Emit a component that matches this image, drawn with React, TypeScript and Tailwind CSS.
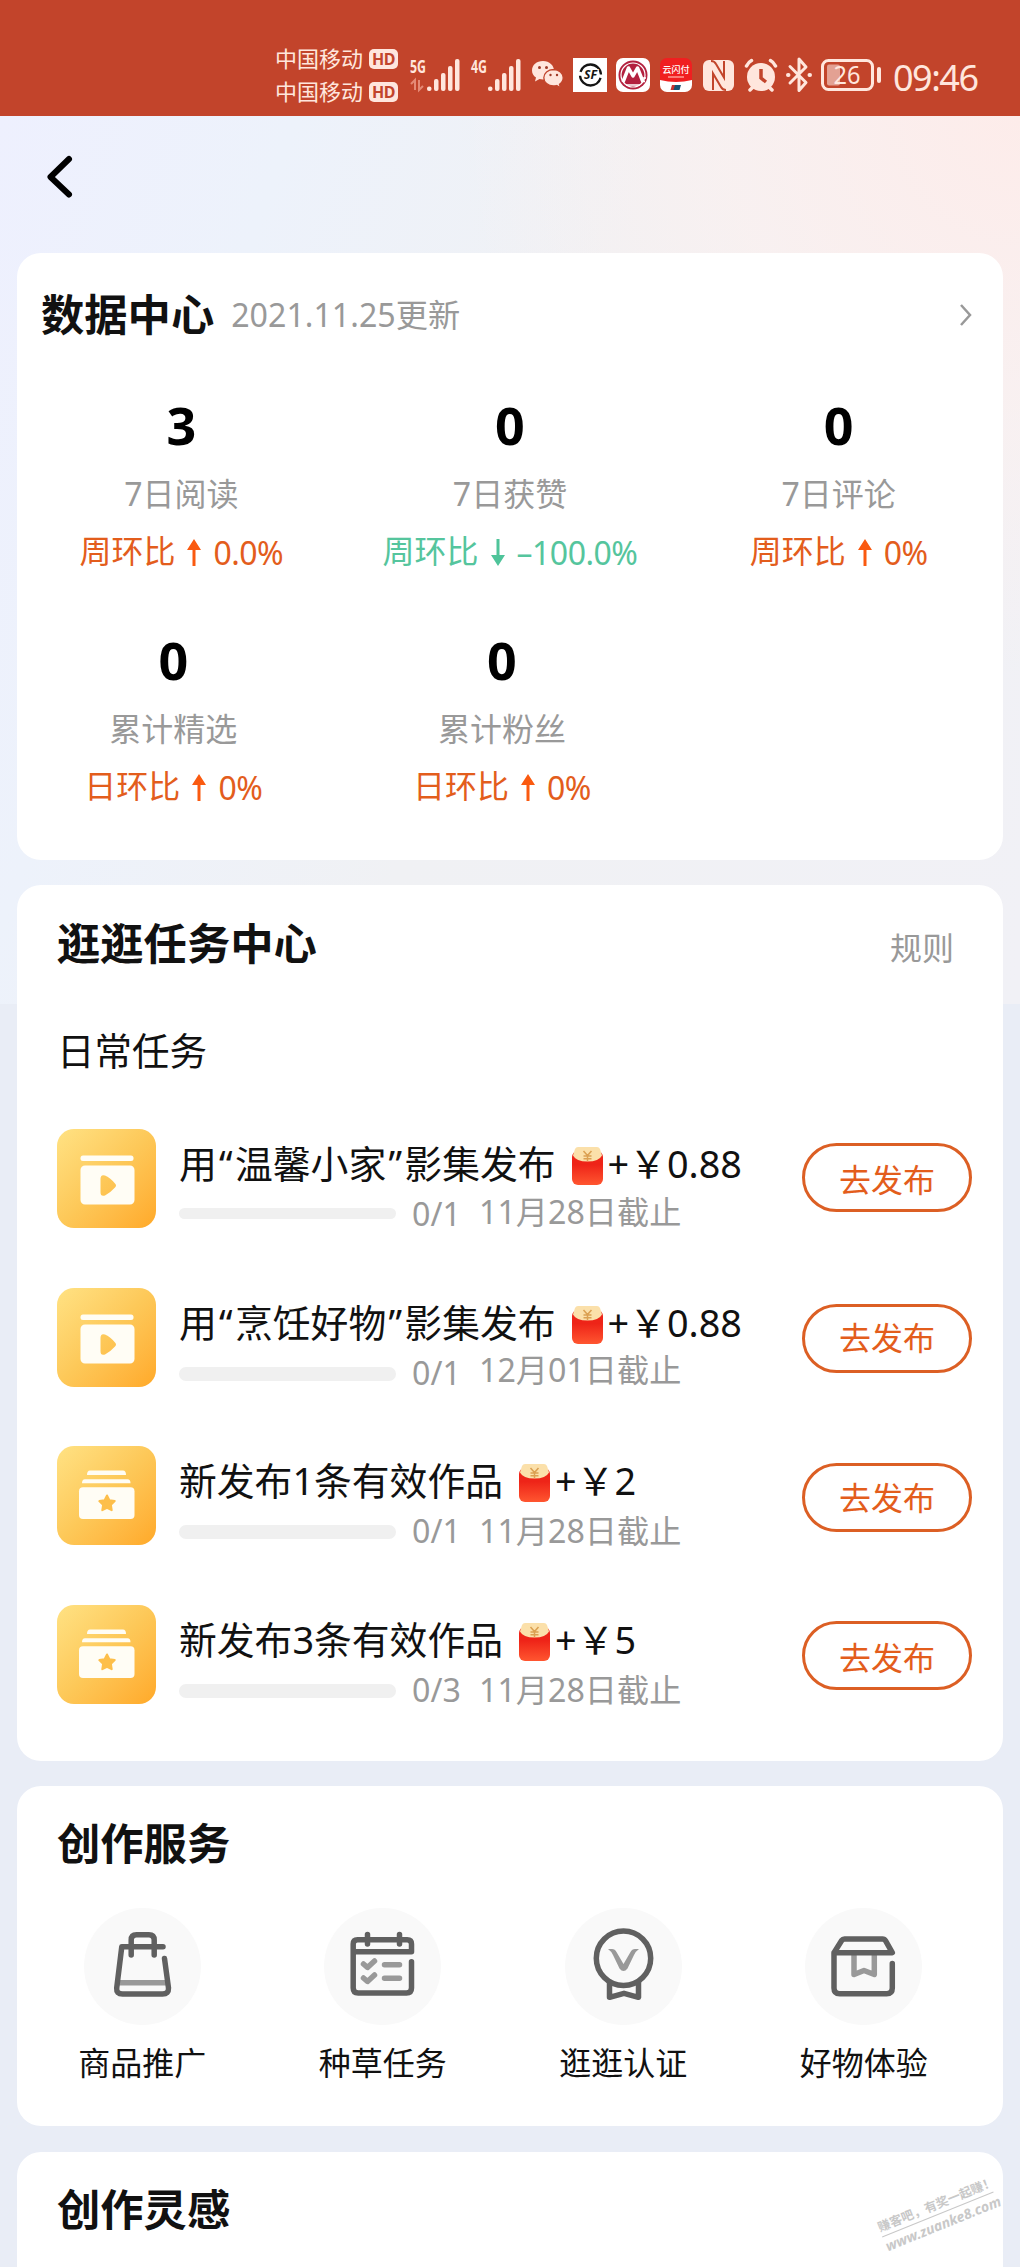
import type { ReactNode } from 'react';

type Stat = { value: string; label: string; period: string; change: string; down?: boolean };

const weekly: Stat[] = [
  { value: '3', label: '7日阅读', period: '周环比', change: '0.0%' },
  { value: '0', label: '7日获赞', period: '周环比', change: '–100.0%', down: true },
  { value: '0', label: '7日评论', period: '周环比', change: '0%' },
];

const daily: Stat[] = [
  { value: '0', label: '累计精选', period: '日环比', change: '0%' },
  { value: '0', label: '累计粉丝', period: '日环比', change: '0%' },
];

const tasks = [
  { title: <Album name="温馨小家" />, reward: '0.88', progress: '0/1', deadline: '11月28日截止', album: true, bar: 'mt-[20px] h-[11px]', date: 'mt-1', button: 'mt-[14px] pt-1' },
  { title: <Album name="烹饪好物" />, reward: '0.88', progress: '0/1', deadline: '12月01日截止', album: true, bar: 'mt-[20px] h-[14px]', date: 'mt-[3px]', button: 'mt-[16px]' },
  { title: '新发布1条有效作品', reward: '2', progress: '0/1', deadline: '11月28日截止', album: false, bar: 'mt-[20px] h-[14px]', date: 'mt-1.5', button: 'mt-[17px]' },
  { title: '新发布3条有效作品', reward: '5', progress: '0/3', deadline: '11月28日截止', album: false, bar: 'mt-[20px] h-[14px]', date: 'mt-1.5', button: 'mt-[16px] pt-1' },
];

function Album({ name }: { name: string }) {
  return (
    <>
      用<span className="px-[2.300px]">“</span>{name}<span className="px-[2.300px]">”</span>影集发布
    </>
  );
}

function Signal({ label, active }: { label: string; active?: boolean }) {
  return (
    <svg className="overflow-visible" width="52" height="34" viewBox="0 0 52 34" fill="#ffe6dd">
      <text x="0" y="14.500" fontSize="17.500" fontWeight="700" textLength="16" lengthAdjust="spacingAndGlyphs">{label}</text>
      {active && (
        <g stroke="#e58a76" strokeWidth="2" fill="none">
          <path d="M5 32V22l-4 4M9 22v10l4-4" />
        </g>
      )}
      <rect x="17" y="28.500" width="4.500" height="4.500" rx="2" />
      <rect x="24" y="21" width="4.500" height="12" rx="2" />
      <rect x="31" y="15" width="4.500" height="18" rx="2" />
      <rect x="38" y="8" width="4.500" height="25" rx="2" />
      <rect x="45" y="1" width="4.500" height="32" rx="2" />
    </svg>
  );
}

function Carrier() {
  return (
    <div className="flex h-[33px] items-center gap-[6px]">
      <span className="text-[22px] leading-[33px] text-[#ffe6dd]">中国移动</span>
      <span className="flex h-5 w-[29px] items-center justify-center rounded-[5px] bg-[#ffe6dd] text-[16px] font-bold leading-[20px] tracking-[-0.500px] text-[#c2442b]">HD</span>
    </div>
  );
}

function StatusBar() {
  return (
    <header className="flex h-[116px] shrink-0 items-start bg-[#c2442b] pl-[275px] text-[#ffe6dd]">
      <div className="mt-[42px] w-[135px]">
        <Carrier />
        <Carrier />
      </div>
      <div className="mt-[58px] flex h-[34px] items-center">
        <Signal label="5G" active />
        <div className="ml-[9px]">
          <Signal label="4G" />
        </div>
        <svg className="ml-[8px]" width="33" height="34" viewBox="0 0 33 34">
          <path d="M12 3C5.500 3 1 7 1 12.500c0 3 1.500 5.500 4 7L4 23.500l4.500-2.500c1 .3 2.300.5 3.500.5 6.500 0 11-4 11-9S18.500 3 12 3z" fill="#ffe6dd" />
          <path d="M22.500 11.500c-5.600 0-9.700 3.700-9.700 8.200s4.100 8.300 9.700 8.300c1.200 0 2.200-.2 3.200-.5l3.800 2.200-1-3.500c2.300-1.500 3.700-3.800 3.700-6.500 0-4.500-4.100-8.200-9.700-8.200z" fill="#ffe6dd" stroke="#c2442b" strokeWidth="1.300" />
          <g fill="#9f3a27">
            <circle cx="8.500" cy="9.500" r="1.500" />
            <circle cx="15.500" cy="9.500" r="1.500" />
            <circle cx="19.500" cy="17" r="1.200" />
            <circle cx="26" cy="17" r="1.200" />
          </g>
        </svg>
        <svg className="ml-[9px]" width="34" height="34" viewBox="0 0 34 34">
          <rect width="34" height="34" fill="#fff" />
          <circle cx="17.500" cy="17" r="10.500" fill="none" stroke="#151515" strokeWidth="2.300" strokeDasharray="29 4" strokeDashoffset="-3" />
          <text x="11" y="21.300" fontSize="11.500" fontWeight="700" fontStyle="italic" fill="#151515" stroke="#fff" strokeWidth="2" paintOrder="stroke" textLength="13" lengthAdjust="spacingAndGlyphs">SF</text>
        </svg>
        <svg className="ml-[9px]" width="34" height="34" viewBox="0 0 34 34">
          <rect width="34" height="34" rx="7" fill="#fff" />
          <circle cx="17" cy="17" r="14.500" fill="#b3213f" />
          <circle cx="17" cy="17" r="12" fill="none" stroke="#fff" strokeWidth="1.200" />
          <path d="M7 24 12.500 10 17 18l4.500-8L27 24" fill="none" stroke="#fff" strokeWidth="3.500" strokeLinejoin="round" />
          <path d="M24 20h6M25 23.500h4M10 27h14" stroke="#fff" strokeWidth="1.300" />
        </svg>
        <svg className="ml-[9px]" width="34" height="34" viewBox="0 0 34 34">
          <path d="M1 17h32v10a7 7 0 0 1-7 7H8a7 7 0 0 1-7-7z" fill="#fff" />
          <path d="M1 7a7 7 0 0 1 7-7h18a7 7 0 0 1 7 7v15q-16 4-32 0z" fill="#f01f20" />
          <text x="3.500" y="15" fontSize="9" fontWeight="500" fill="#fff">云闪付</text>
          <path d="M9 19h16" stroke="#ff9a92" strokeWidth="1.500" />
          <path d="m13 27-1.500 5h4l1.500-5z" fill="#c9342f" />
          <path d="m16 27-1.500 5h6l1.500-5z" fill="#175372" />
        </svg>
        <svg className="ml-[9px]" width="34" height="34" viewBox="0 0 34 34">
          <rect x="1" y="2" width="31" height="31" rx="6" fill="#ffe6dd" />
          <path d="M9 3q3.500 0 5 3l8 13.500V3M24 32q-3.500 0-5-3l-8-13.500V32" fill="none" stroke="#c2442b" strokeWidth="2" />
        </svg>
        <svg className="ml-[7px]" width="36" height="34" viewBox="0 0 36 34">
          <circle cx="18" cy="19" r="14" fill="#ffe6dd" />
          <path d="M18 11v9l5 4" fill="none" stroke="#c2442b" strokeWidth="3.500" />
          <path d="M3.500 8q2-4 5-5.500M32.500 8q-2-4-5-5.500M7 32l3-3M29 32l-3-3" fill="none" stroke="#ffe6dd" strokeWidth="3.500" strokeLinecap="round" />
        </svg>
        <svg className="ml-[6px]" width="28" height="36" viewBox="0 0 28 36" fill="none" stroke="#ffe6dd" strokeWidth="3" strokeLinecap="round" strokeLinejoin="round">
          <path d="m5 9.500 16 16-7 8V2l7 8L5 26" />
          <path d="M3 18h.5M24.500 18h.5" strokeWidth="4" />
        </svg>
        <svg className="ml-[8px] overflow-visible" width="62" height="34" viewBox="0 0 62 34">
          <rect x="1.500" y="2.500" width="50" height="29" rx="6" fill="none" stroke="#ffe6dd" strokeWidth="3" />
          <rect x="6" y="6.500" width="13" height="21" rx="2" fill="#e3a193" />
          <text x="12.500" y="25.500" fontSize="25" fill="#ffe6dd" textLength="27" lengthAdjust="spacingAndGlyphs">26</text>
          <rect x="56" y="9" width="4" height="16" rx="2" fill="#ffe6dd" />
        </svg>
        <span className="ml-[10px] mt-[5px] text-[36px] leading-[34px] tracking-[-1.500px]">09:46</span>
      </div>
    </header>
  );
}

function Card({ className, children }: { className: string; children: ReactNode }) {
  return <section className={`shrink-0 rounded-[24px] bg-white ${className}`}>{children}</section>;
}

function Title({ children }: { children: ReactNode }) {
  return <h2 className="text-[43.300px] font-bold leading-[48px] text-[#111]">{children}</h2>;
}

function StatCell({ value, label, period, change, down }: Stat) {
  return (
    <div className="flex flex-col items-center">
      <p className="text-[52px] font-bold leading-[60px] text-black">{value}</p>
      <p className="mt-[19px] text-[32px] leading-[40px] text-[#999]">{label}</p>
      <p className={`mt-[15px] flex items-center text-[32px] leading-[40px] ${down ? 'text-[#55c59d]' : 'text-[#e35d1c]'}`}>
        {period}
        <svg className={`mx-[12px] mt-[3px] ${down ? 'rotate-180' : ''}`} width="14" height="27" viewBox="0 0 14 27" fill={down ? '#4fc49a' : '#fa5a10'}>
          <path d="M7 0 14 11H8.500v16h-3V11H0z" />
        </svg>
        <span className="mt-[4px] tracking-[-0.500px]">{change}</span>
      </p>
    </div>
  );
}

function TaskIcon({ album }: { album: boolean }) {
  return (
    <div className="h-[99px] w-[99px] shrink-0 rounded-[17px] bg-linear-to-br from-[#ffe283] via-[#fdc858] to-[#ffa927]">
      {album ? (
        <svg width="99" height="99" viewBox="0 0 99 99" fill="#fffdf5">
          <rect x="23.500" y="26.500" width="53" height="5.500" rx="2.500" />
          <path fillRule="evenodd" d="M28 36.500h45a4.500 4.500 0 0 1 4.500 4.500v30a4.500 4.500 0 0 1-4.500 4.500H28a4.500 4.500 0 0 1-4.500-4.500V41a4.500 4.500 0 0 1 4.500-4.500zM43.500 50v13q0 5 4.500 3.500 5-2.500 10-8 2-2 0-4-5-6-10-8-4.500-1.500-4.500 3.500z" />
        </svg>
      ) : (
        <svg width="99" height="99" viewBox="0 0 99 99" fill="#fffdf5">
          <path d="M33 24.500h33q3 0 3 4.500H30q0-4.500 3-4.500zM28 33.300h42.500q3 0 3 4H25q0-4 3-4z" />
          <rect x="22" y="41.300" width="55.500" height="31.700" rx="4" />
          <path d="m50 49.500 2.400 4.700 5.300.9-3.800 3.800.8 5.300-4.700-2.400-4.700 2.400.8-5.300-3.800-3.800 5.300-.9z" fill="#fdbf4b" stroke="#fdbf4b" strokeWidth="2" strokeLinejoin="round" />
        </svg>
      )}
    </div>
  );
}

function RedPacket() {
  return (
    <svg className="mt-1 shrink-0" width="33" height="38" viewBox="0 0 33 38">
      <defs>
        <linearGradient id="packet" x1="0" y1="0" x2="0" y2="1">
          <stop offset="0.400" stopColor="#ee2418" />
          <stop offset="1" stopColor="#ff5630" />
        </linearGradient>
      </defs>
      <rect x="1" y="4" width="31" height="34" rx="6" fill="url(#packet)" />
      <path d="M2 8.500 4 2q1-2 3-2h19q2 0 3 2l2 6.500q-3 6-14.500 6T2 8.500z" fill="#fbe0aa" />
      <path d="m12.500 4 4 4.500 4-4.500M16.500 8.500V14M12.500 9h8M12.500 11.700h8" fill="none" stroke="#dba052" strokeWidth="1.500" />
    </svg>
  );
}

function TaskRow({ task }: { task: (typeof tasks)[number] }) {
  return (
    <li className="flex h-[158.700px] items-start">
      <TaskIcon album={task.album} />
      <div className="ml-[23px] mt-[11px] flex-1">
        <div className="flex h-12 items-center text-[37.800px] leading-[48px] text-[#111]">
          <span className="mr-[15px] whitespace-nowrap">{task.title}</span>
          <RedPacket />
          <span className="ml-[4px] whitespace-nowrap">+￥{task.reward}</span>
        </div>
        <div className="flex h-[52px] items-start text-[32.200px] leading-[40px] text-[#999]">
          <span className={`w-[217px] rounded-full bg-[#f0f0f0] ${task.bar}`} />
          <span className="ml-4 mt-1.5 w-[67px]">{task.progress}</span>
          <span className={task.date}>{task.deadline}</span>
        </div>
      </div>
      <button className={`flex h-[69px] w-[170px] shrink-0 items-center justify-center rounded-full border-[3px] border-[#dc5f24] text-[32px] leading-[40px] text-[#e35d1c] ${task.button}`}>
        去发布
      </button>
    </li>
  );
}

const services = [
  {
    name: '商品推广',
    icon: (
      <>
        <path d="M35 74.700h48" stroke="#999" />
        <path d="M47.200 47V32q0-5.300 5.300-5.300h12.400q5.300 0 5.300 5.300v15" />
        <path d="M79 38.700H37.800L32.700 80q-.5 6 5.800 6h40q6.300 0 6-6l-4-29.500" />
      </>
    ),
  },
  {
    name: '种草任务',
    icon: (
      <>
        <path d="m39.500 56 4 3.500 7-6.500M39.500 70l4 3.500 7-6.500M60.500 56.700h15M60.500 70.300h15" stroke="#999" />
        <path d="M29.200 43.700h58.300V36q0-4.300-4.300-4.300H33.500q-4.300 0-4.300 4.300v44q0 5 5 5h48.300q5 0 5-5V53.700M43.500 26.500v9.500M75.500 26.500v9.500" />
      </>
    ),
  },
  {
    name: '逛逛认证',
    icon: (
      <>
        <path d="M43 41h4q3 0 4.500 3l7 12 7-12q1.500-3 4.500-3h4q-3 2-5 6l-6.500 13.500q-4 5-8 0L48 47q-2-4-5-6z" fill="#999" stroke="none" />
        <circle cx="58.500" cy="50.300" r="27.200" />
        <path d="M44.500 74v15.300l14.500-4 14.500 4V74" />
      </>
    ),
  },
  {
    name: '好物体验',
    icon: (
      <>
        <path d="M49 47v19.500l10-4 10.300 4V47" stroke="#999" />
        <path d="M87.300 55.500V80q0 5.700-5.700 5.700H34.700Q29 85.700 29 80V44.700l7.500-12q1.200-1.700 3-1.700h38q2 0 3 1.700l6.800 12H29" />
      </>
    ),
  },
];

export default function App() {
  return (
    <div className="flex h-[2267px] w-[1020px] flex-col overflow-hidden bg-[#e9edf6] font-['Noto_Sans','Noto_Sans_CJK_SC',sans-serif]">
      <StatusBar />
      <div className="relative flex flex-1 flex-col bg-[radial-gradient(circle_at_100%_0,#fdecea_0,#fdf0ee99_300px,transparent_560px),linear-gradient(110deg,#eef0fe_0,#edf2fb_22%,#f0f1f4_50%,#f1f1f6_100%)] bg-[length:1020px_888px] bg-no-repeat px-[17px]">
        <nav className="h-[137px] shrink-0 pl-[28px] pt-[38px]">
          <svg width="30" height="46" viewBox="0 0 30 46" fill="none" stroke="#000" strokeWidth="6" strokeLinecap="round" strokeLinejoin="round">
            <path d="M24 5 5.500 23 24 40.500" />
          </svg>
        </nav>

        <Card className="h-[607px]">
          <div className="flex items-center pl-6 pr-[31px] pt-[38px]">
            <Title>数据中心</Title>
            <span className="ml-[17px] text-[32.200px] leading-[48px] text-[#999]">2021.11.25更新</span>
            <svg className="ml-auto" width="13" height="24" viewBox="0 0 13 24" fill="none" stroke="#999" strokeWidth="2.500">
              <path d="m2 2 9 10-9 10" />
            </svg>
          </div>
          <div className="mt-[56px] grid grid-cols-3">
            {weekly.map((s) => <StatCell key={s.label} {...s} />)}
          </div>
          <div className="-ml-2 mr-2 mt-[57px] grid grid-cols-3">
            {daily.map((s) => <StatCell key={s.label} {...s} />)}
          </div>
        </Card>

        <Card className="mt-[25px] h-[876px] pl-10 pr-[31px]">
          <div className="flex justify-between pr-[18px] pt-[35px]">
            <Title>逛逛任务中心</Title>
            <span className="mt-1 text-[32px] leading-[48px] text-[#999]">规则</span>
          </div>
          <h3 className="mt-[55px] text-[37.500px] leading-[48px] text-[#111]">日常任务</h3>
          <ul className="mt-[54px]">
            {tasks.map((t) => <TaskRow key={t.button + t.date} task={t} />)}
          </ul>
        </Card>

        <Card className="mt-[25px] h-[340px]">
          <div className="pl-10 pt-[34px]">
            <Title>创作服务</Title>
          </div>
          <div className="ml-[5px] mt-10 grid w-[962px] grid-cols-4">
            {services.map((s) => (
              <div key={s.name} className="flex flex-col items-center">
                <svg className="rounded-full bg-[#f9f9f9]" width="117" height="117" viewBox="0 0 117 117" fill="none" stroke="#606060" strokeWidth="5.500" strokeLinecap="round" strokeLinejoin="round">
                  {s.icon}
                </svg>
                <span className="mt-[18px] text-[32px] leading-[40px] text-[#111]">{s.name}</span>
              </div>
            ))}
          </div>
        </Card>

        <section className="mt-[26px] h-[115px] rounded-t-[24px] bg-white pl-10 pt-[34px]">
          <Title>创作灵感</Title>
        </section>

        <div className="absolute bottom-[32px] right-[22px] w-[120px] -rotate-[22deg] font-bold text-[#c8c8c8]">
          <p className="whitespace-nowrap border-b border-[#c8c8c8] text-[12.500px] leading-[19px]">赚客吧，有奖一起赚！</p>
          <p className="whitespace-nowrap text-[14px] italic leading-[20px]">www.zuanke8.com</p>
        </div>
      </div>
    </div>
  );
}
